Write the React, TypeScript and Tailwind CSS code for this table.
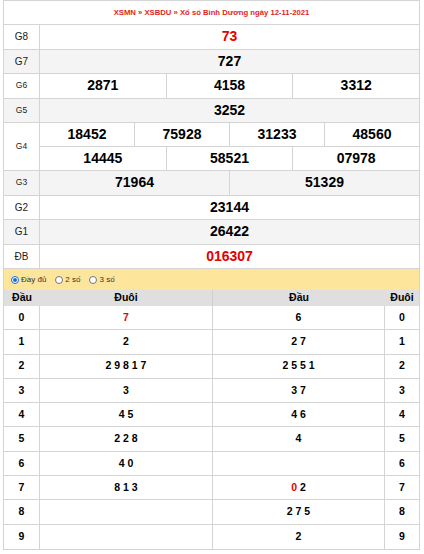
import React, { FC } from "react";

type Prize = { label: string; lines: string[][]; red?: boolean; small?: boolean };

const prizes: Prize[] = [
  { label: "G8", lines: [["73"]], red: true },
  { label: "G7", lines: [["727"]] },
  { label: "G6", lines: [["2871", "4158", "3312"]], small: true },
  { label: "G5", lines: [["3252"]], small: true },
  { label: "G4", lines: [["18452", "75928", "31233", "48560"], ["14445", "58521", "07978"]], small: true },
  { label: "G3", lines: [["71964", "51329"]], small: true },
  { label: "G2", lines: [["23144"]] },
  { label: "G1", lines: [["26422"]] },
  { label: "ĐB", lines: [["016307"]], red: true },
];

// [đầu -> đuôi], [đuôi <- đầu]; "*" marks the special-prize digit
const dau = ["*7", "2", "2 9 8 1 7", "3", "4 5", "2 2 8", "4 0", "8 1 3", "", ""];
const duoi = ["6", "2 7", "2 5 5 1", "3 7", "4 6", "4", "", "*0 2", "2 7 5", "2"];

const Digits: FC<{ text: string }> = ({ text }) => {
  if (text.startsWith("*")) {
    const [first, ...rest] = text.slice(1).split(" ");
    return (
      <span>
        <span className="text-[#e60000]">{first}</span>
        {rest.length > 0 && " " + rest.join(" ")}
      </span>
    );
  }
  return <span>{text}</span>;
};

const Radio: FC<{ checked?: boolean; label: string }> = ({ checked, label }) => (
  <label className="flex items-center gap-[2px]">
    {checked ? (
      <span className="flex h-[8px] w-[8px] items-center justify-center rounded-full border border-[#1a6fd6] bg-white">
        <span className="h-[4px] w-[4px] rounded-full bg-[#1a6fd6]" />
      </span>
    ) : (
      <span className="h-[8px] w-[8px] rounded-full border border-[#767676] bg-white" />
    )}
    <span className="text-[8px] text-[#333]">{label}</span>
  </label>
);

const App: FC = () => {
  return (
    <div className="min-h-[554px] bg-white pt-0 font-['Liberation_Sans',Arial,sans-serif]">
      <div className="ml-[3px] w-[417px] border border-[#d4d4d4]">
        {/* title */}
        <div className="flex h-[24px] items-center justify-center border-b border-[#d4d4d4] text-[7.7px] font-bold text-[#e31e24]">
          XSMN » XSBDU » Xổ số Bình Dương ngày 12-11-2021
        </div>

        {/* prizes */}
        {prizes.map((p, i) => (
          <div
            key={p.label}
            className={`flex border-b border-[#d4d4d4] ${i % 2 === 1 ? "bg-[#f4f4f4]" : "bg-white"}`}
          >
            <div
              className={`flex w-[36px] shrink-0 items-center justify-center border-r border-[#d4d4d4] text-[#222] ${
                p.small ? "text-[8.5px]" : "text-[10px]"
              }`}
            >
              {p.label}
            </div>
            <div className="flex flex-1 flex-col">
              {p.lines.map((line, li) => (
                <div
                  key={li}
                  className={`flex h-[23.5px] ${li < p.lines.length - 1 ? "border-b border-[#d4d4d4]" : ""}`}
                >
                  {line.map((num, ni) => (
                    <div
                      key={ni}
                      className={`flex flex-1 items-center justify-center text-[14px] font-bold ${
                        p.red ? "text-[#e60000]" : "text-black"
                      } ${ni < line.length - 1 ? "border-r border-[#d4d4d4]" : ""}`}
                    >
                      {num}
                    </div>
                  ))}
                </div>
              ))}
            </div>
          </div>
        ))}

        {/* options */}
        <div className="flex h-[21px] items-center gap-[9px] bg-[#fde59c] pl-[7px]">
          <Radio checked label="Đầy đủ" />
          <Radio label="2 số" />
          <Radio label="3 số" />
        </div>

        {/* loto header */}
        <div className="flex h-[16px] bg-[#dfdfdf] text-[10.5px] font-bold text-black">
          <div className="flex w-[36px] items-center justify-center">Đầu</div>
          <div className="flex w-[173px] items-center justify-center border-r border-[#d0d0d0]">Đuôi</div>
          <div className="flex w-[172px] items-center justify-center">Đầu</div>
          <div className="flex flex-1 items-center justify-center">Đuôi</div>
        </div>

        {/* loto rows */}
        {dau.map((d, i) => (
          <div
            key={i}
            className={`flex h-[24.3px] text-[10.5px] font-bold text-black ${i < 9 ? "border-b border-[#d4d4d4]" : ""}`}
          >
            <div className="flex w-[36px] items-center justify-center border-r border-[#d4d4d4]">{i}</div>
            <div className="flex w-[173px] items-center justify-center border-r border-[#d4d4d4]">
              <Digits text={d} />
            </div>
            <div className="flex w-[172px] items-center justify-center border-r border-[#d4d4d4]">
              <Digits text={duoi[i]} />
            </div>
            <div className="flex flex-1 items-center justify-center">{i}</div>
          </div>
        ))}
      </div>
    </div>
  );
};

export default App;
